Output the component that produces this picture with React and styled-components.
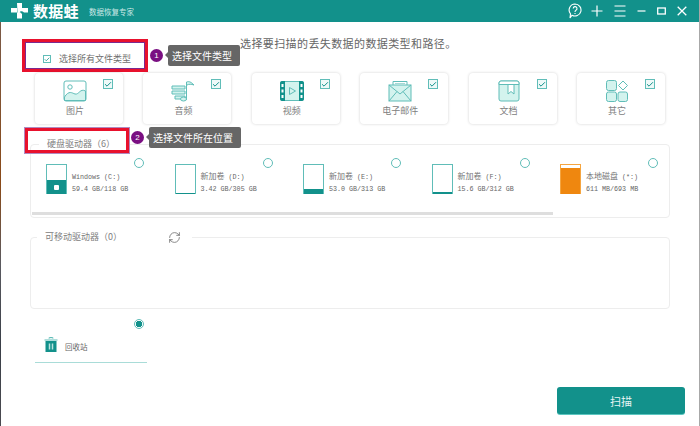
import React from 'react';
import styled, {createGlobalStyle} from 'styled-components';
import {Check, RefreshCw} from 'lucide-react';

const teal = '#12918b';
const line = '#60bdb8';
const fill = '#d3f3ee';

const Global = createGlobalStyle`
  html, body {
    margin: 0;
    padding: 0;
    background: #fff;
  }
  body {
    font-family: "Noto Sans CJK SC", "Liberation Sans", sans-serif;
    color: #777;
  }
`;

const PhotoIcon = () => (
  <svg width="24" height="22" viewBox="0 0 24 22" fill="none" stroke={line}>
    <rect x="1" y="1" width="22" height="20" rx="2" />
    <circle cx="7" cy="7" r="2.2" />
    <path d="M1.500 17 C6 10 9 13 12 14 C16 15 17 8 22.500 11 V20.500 H1.500 Z" fill={fill} />
  </svg>
);

const MusicIcon = () => (
  <svg width="24" height="22" viewBox="0 0 24 22" fill="none" stroke={line}>
    <path d="M1 6 H14 V9 H1 Z M1 11 H14 V14 H1 Z" fill={fill} />
    <path d="M4 16 H14 V19 H4 Z" fill={fill} />
    <path d="M15.500 20 V2 C18 1 20 2 23 5 C20 4 18 4 16 5" fill={fill} />
    <ellipse cx="12.500" cy="19" rx="3" ry="2" fill={fill} />
  </svg>
);

const VideoIcon = () => (
  <svg width="24" height="20" viewBox="0 0 24 20">
    <rect x="0.500" y="0.500" width="23" height="19" rx="2" fill={fill} stroke={line} />
    <path d="M0 2 a2 2 0 0 1 2-2 H5 V20 H2 a2 2 0 0 1-2-2 Z M19 0 H22 a2 2 0 0 1 2 2 V18 a2 2 0 0 1-2 2 H19 Z" fill={teal} />
    <path d="M1.500 3 H3.500 V6 H1.500 Z M1.500 8.500 H3.500 V11.500 H1.500 Z M1.500 14 H3.500 V17 H1.500 Z M20.500 3 H22.500 V6 H20.500 Z M20.500 8.500 H22.500 V11.500 H20.500 Z M20.500 14 H22.500 V17 H20.500 Z" fill="#fff" />
    <path d="M9.500 6.500 L15.500 10 L9.500 13.500 Z" fill="none" stroke={line} />
  </svg>
);

const MailIcon = () => (
  <svg width="24" height="22" viewBox="0 0 24 22" fill="none" stroke={line}>
    <path d="M5 5 V1.500 H19 V5" />
    <path d="M7 3.500 H17" stroke="#a5d9d5" />
    <rect x="1" y="5" width="22" height="16" fill={fill} />
    <path d="M1 5 L12 14 L23 5 M1 21 L9 11.500 M23 21 L15 11.500" />
  </svg>
);

const DocIcon = () => (
  <svg width="22" height="22" viewBox="0 0 22 22" fill="none" stroke={line}>
    <rect x="1" y="1" width="20" height="20" rx="2" fill={fill} />
    <path d="M1 4.500 V3 a2 2 0 0 1 2-2 H19 a2 2 0 0 1 2 2 V4.500 Z" fill="#fff" />
    <path d="M10 4.500 H16 V14 L13 11.500 L10 14 Z" fill="#fff" />
  </svg>
);

const OtherIcon = () => (
  <svg width="22" height="22" viewBox="0 0 22 22" stroke={line} fill={fill}>
    <rect x="0.500" y="0.500" width="10" height="10" rx="2" />
    <path d="M17 1 L21.500 5.500 L17 10 L12.500 5.500 Z" fill="#fff" />
    <rect x="0.500" y="12" width="10" height="9.500" rx="2" />
    <rect x="12" y="12" width="9.500" height="9.500" rx="2" />
  </svg>
);

const TrashIcon = () => (
  <svg width="14" height="15" viewBox="0 0 14 15">
    <path d="M5 1.500 a2 1 0 0 1 4 0 M0.500 3 H13.500" stroke={line} strokeWidth="1.200" fill="none" />
    <rect x="1.500" y="4" width="11" height="11" fill={teal} />
    <path d="M5.500 6.500 V12.500 M8.500 6.500 V12.500" stroke="#b9e3e0" strokeWidth="1.500" />
  </svg>
);

const Logo = () => (
  <svg width="17" height="16" viewBox="0 0 17 16" fill="#fff">
    <path d="M6 0 H11 V5 H17 V9.500 H13 C11 7.500 9 8 8 10 L6.500 10 Z M0 5 H6 V9.500 H0 Z" />
    <path d="M6 10 C7 8.500 9 8.500 10 10 L11 11 V15.500 H6 Z" />
  </svg>
);

const HeadIcons = () => (
  <Controls>
    <HelpSlot>
      <svg width="14" height="16" viewBox="0 0 14 16" fill="none" stroke="#fff" strokeWidth="1.100">
        <path d="M7 1 a6 6 0 1 1 -3 11.200 L2 15 L2.500 10.800 A6 6 0 0 1 7 1 Z" />
        <path d="M5.200 5.500 a1.900 1.900 0 1 1 2.800 1.700 c-0.700 0.400 -1 0.800 -1 1.700 M7 10 V11" />
      </svg>
    </HelpSlot>
    <svg width="12" height="12" viewBox="0 0 12 12" stroke="#fff" strokeWidth="1.200">
      <path d="M6 0.500 V11.500 M0.500 6 H11.500" />
    </svg>
    <svg width="12" height="12" viewBox="0 0 12 12" stroke="#fff" strokeWidth="1.200">
      <path d="M0.500 1 H11.500 M0.500 6 H11.500 M0.500 11 H11.500" />
    </svg>
    <svg width="9" height="12" viewBox="0 0 9 12" stroke="#fff" strokeWidth="1.200">
      <path d="M0.500 6 H8.500" />
    </svg>
    <svg width="9" height="12" viewBox="0 0 9 12" fill="none" stroke="#fff" strokeWidth="1.300">
      <rect x="0.700" y="3" width="7.600" height="6" />
    </svg>
    <svg width="10" height="12" viewBox="0 0 10 12" stroke="#fff" strokeWidth="1.300">
      <path d="M0.700 1.700 L9.300 10.300 M9.300 1.700 L0.700 10.300" />
    </svg>
  </Controls>
);

const types = [
  {name: '图片', Icon: PhotoIcon},
  {name: '音频', Icon: MusicIcon},
  {name: '视频', Icon: VideoIcon},
  {name: '电子邮件', Icon: MailIcon},
  {name: '文档', Icon: DocIcon},
  {name: '其它', Icon: OtherIcon},
];

const drives = [
  {name: '', mono: 'Windows (C:)', size: '59.4 GB/118 GB', used: 48, win: true},
  {name: '新加卷', mono: ' (D:)', size: '3.42 GB/305 GB', used: 2},
  {name: '新加卷', mono: ' (E:)', size: '53.0 GB/313 GB', used: 17},
  {name: '新加卷', mono: ' (F:)', size: '15.6 GB/312 GB', used: 6},
  {name: '本地磁盘', mono: ' (*:)', size: '611 MB/693 MB', used: 88, orange: true},
];

const App = () => {
  return (
    <>
      <Global />
      <Screen>
        <Edge />
        <Window>
          <Header>
            <Brand>
              <Logo />
              <BrandName>数据蛙</BrandName>
              <Slogan>数据恢复专家</Slogan>
            </Brand>
            <HeadIcons />
          </Header>
          <Main>
            <TopRow>
              <SelectAll>
                <SmallCheck>
                  <Check size={7} strokeWidth={3} color={teal} />
                </SmallCheck>
                选择所有文件类型
              </SelectAll>
              <Callout>
                <Badge>1</Badge>
                <Tip>选择文件类型</Tip>
              </Callout>
              <Title>选择要扫描的丢失数据的数据类型和路径。</Title>
            </TopRow>
            <Cards>
              {types.map(({name, Icon}) => (
                <Card key={name}>
                  <IconSlot>
                    <Icon />
                  </IconSlot>
                  <CardName>{name}</CardName>
                  <CardCheck>
                    <Check size={9} strokeWidth={3} color={teal} />
                  </CardCheck>
                </Card>
              ))}
            </Cards>
            <Group $height={74} $top={20}>
              <LegendBar $left={8}>
                <Legend>硬盘驱动器（6）</Legend>
              </LegendBar>
              <RedTag />
              <FloatCallout>
                <Badge>2</Badge>
                <Tip>选择文件所在位置</Tip>
              </FloatCallout>
              <Drives>
                {drives.map((d) => (
                  <Drive key={d.size}>
                    <Disk $orange={d.orange}>
                      <Used $orange={d.orange} style={{height: `${d.used}%`}}>
                        {d.win && <WinMark />}
                      </Used>
                    </Disk>
                    <DriveText>
                      <DriveName>
                        {d.name}
                        <Mono>{d.mono}</Mono>
                      </DriveName>
                      <Mono>{d.size}</Mono>
                    </DriveText>
                    <Radio $left={88} $top={-6} />
                  </Drive>
                ))}
              </Drives>
              <ScrollBar />
            </Group>
            <Group $height={72} $top={19}>
              <LegendBar $left={6}>
                <Legend>可移动驱动器（0）</Legend>
                <RefreshCw size={13} strokeWidth={1.4} color="#666" />
              </LegendBar>
            </Group>
            <Recycle>
              <TrashSlot>
                <TrashIcon />
              </TrashSlot>
              <RecycleName>回收站</RecycleName>
              <Radio $left={99} $top={0} $on />
            </Recycle>
            <Footer>
              <ScanButton>扫描</ScanButton>
            </Footer>
          </Main>
        </Window>
      </Screen>
    </>
  );
};

const Screen = styled.div`
  display: flex;
  width: 700px;
  height: 426px;
  overflow: hidden;
`;
const Edge = styled.div`
  flex: none;
  width: 1px;
  margin-top: 22px;
  background: linear-gradient(#7a5a48, #8a4a18 40%, #5a5a60 60%, #3a3f48 80%, #4a4a50);
`;
const Window = styled.div`
  flex: 1;
  display: flex;
  flex-direction: column;
  background: #fff;
  border-right: 1px solid #a8a8a8;
`;
const Header = styled.div`
  flex: none;
  height: 22px;
  margin-left: -1px;
  display: flex;
  align-items: center;
  justify-content: space-between;
  padding: 0 12px 0 11px;
  background: ${teal};
`;
const Brand = styled.div`
  display: flex;
  align-items: center;
  color: #fff;
`;
const BrandName = styled.span`
  margin-left: 5px;
  font-size: 15px;
  font-weight: 700;
  letter-spacing: 0.3px;
  line-height: 20px;
`;
const Slogan = styled.span`
  margin-left: 10px;
  font-size: 7.500px;
  color: #cfe9e7;
`;
const Controls = styled.div`
  display: flex;
  align-items: center;
  gap: 11px;
`;
const HelpSlot = styled.div`
  display: flex;
  margin-right: -2px;
`;
const Main = styled.div`
  flex: 1;
  display: flex;
  flex-direction: column;
  min-height: 0;
  padding: 17px 0 0 28px;
`;
const TopRow = styled.div`
  display: flex;
  align-items: center;
  height: 33px;
  margin-left: -7px;
`;
const SelectAll = styled.div`
  flex: none;
  box-sizing: border-box;
  width: 126px;
  height: 33px;
  display: flex;
  align-items: flex-end;
  gap: 8px;
  padding: 0 0 4px 18px;
  border: 3px solid #e8112d;
  outline: 1px solid #7a2a90;
  outline-offset: -4px;
  font-size: 9px;
  line-height: 12px;
  color: #6f6f6f;
`;
const SmallCheck = styled.span`
  box-sizing: border-box;
  width: 8px;
  height: 8px;
  margin-bottom: 2px;
  display: flex;
  align-items: center;
  justify-content: center;
  border: 1px solid ${line};
`;
const Callout = styled.div`
  flex: none;
  display: flex;
  align-items: center;
  gap: 5px;
  margin-left: 2px;
`;
const FloatCallout = styled(Callout)`
  position: absolute;
  left: 100px;
  top: -18px;
  margin: 0;
`;
const Badge = styled.span`
  flex: none;
  width: 13px;
  height: 13px;
  display: flex;
  align-items: center;
  justify-content: center;
  border-radius: 50%;
  background: #7a0f82;
  color: #fff;
  font-family: "Liberation Sans", sans-serif;
  font-size: 8px;
`;
const Tip = styled.span`
  position: relative;
  flex: none;
  height: 21px;
  padding: 0 8px 0 4px;
  display: flex;
  align-items: center;
  background: #666;
  border-radius: 2px;
  color: #fff;
  font-size: 10px;
  &::before {
    content: '';
    position: absolute;
    left: -3px;
    top: 7px;
    border-style: solid;
    border-width: 3px 3px 3px 0;
    border-color: transparent #666 transparent transparent;
  }
`;
const Title = styled.div`
  align-self: flex-start;
  margin: -2px 0 0 0;
  font-size: 11px;
  letter-spacing: 0.4px;
  line-height: 12px;
  white-space: nowrap;
  color: #666;
`;
const Cards = styled.div`
  display: grid;
  grid-template-columns: repeat(6, 88px);
  column-gap: 20.400px;
  margin: 1px 0 0 6px;
`;
const Card = styled.div`
  position: relative;
  box-sizing: border-box;
  height: 51px;
  padding: 7px 8px 0 0;
  display: flex;
  flex-direction: column;
  align-items: center;
  border-radius: 4px;
  box-shadow: 0 0 3px rgba(0, 0, 0, 0.18);
`;
const IconSlot = styled.div`
  height: 22px;
  display: flex;
  align-items: center;
`;
const CardName = styled.span`
  margin-top: 2px;
  font-size: 9px;
  line-height: 14px;
  color: #808080;
`;
const CardCheck = styled.span`
  position: absolute;
  top: 6px;
  right: 10px;
  box-sizing: border-box;
  width: 10px;
  height: 10px;
  display: flex;
  align-items: center;
  justify-content: center;
  border: 1px solid ${line};
  background: #eef9f8;
`;
const Group = styled.div`
  position: relative;
  box-sizing: border-box;
  flex: none;
  width: 640px;
  height: ${(p) => p.$height}px;
  margin: ${(p) => p.$top}px 0 0 1px;
  border: 1px solid #ededed;
  border-radius: 4px;
`;
const LegendBar = styled.div`
  position: absolute;
  top: -8px;
  left: ${(p) => p.$left}px;
  display: flex;
  align-items: center;
  gap: 46px;
  padding: 0 11px 0 8px;
  background: #fff;
`;
const Legend = styled.span`
  font-size: 9px;
  line-height: 14px;
  color: #808080;
`;
const RedTag = styled.div`
  position: absolute;
  left: -6px;
  top: -17px;
  width: 104px;
  height: 25px;
  box-sizing: border-box;
  border: 3px solid #e8112d;
  outline: 1px solid #b08ac0;
`;
const Drives = styled.div`
  display: grid;
  grid-template-columns: repeat(5, 128.500px);
  padding: 19px 0 0 15px;
`;
const Drive = styled.div`
  position: relative;
  height: 30px;
  display: flex;
  gap: 5px;
`;
const Disk = styled.div`
  flex: none;
  box-sizing: border-box;
  width: 21px;
  height: 30px;
  display: flex;
  align-items: flex-end;
  border: 1px solid ${(p) => (p.$orange ? '#f5a540' : line)};
  border-bottom: 0;
`;
const Used = styled.div`
  flex: 1;
  display: flex;
  align-items: center;
  justify-content: center;
  background: ${(p) => (p.$orange ? '#ef870f' : teal)};
`;
const WinMark = styled.span`
  width: 5px;
  height: 5px;
  border-radius: 1px;
  background: #fff;
`;
const DriveText = styled.div`
  display: flex;
  flex-direction: column;
  justify-content: flex-end;
  gap: 3px;
  padding: 8px 0 0 0;
  font-size: 8px;
  line-height: 9px;
  color: #777;
`;
const DriveName = styled.span`
  white-space: pre;
`;
const Mono = styled.span`
  font-family: "Liberation Mono", monospace;
  font-size: 6.700px;
  white-space: pre;
  color: #666;
`;
const Radio = styled.span`
  position: absolute;
  left: ${(p) => p.$left}px;
  top: ${(p) => p.$top}px;
  box-sizing: border-box;
  width: 10px;
  height: 10px;
  border-radius: 50%;
  border: 1px solid ${line};
  background: ${(p) => (p.$on ? `radial-gradient(circle, ${teal} 3px, #fff 3.500px)` : '#fff')};
`;
const ScrollBar = styled.div`
  position: absolute;
  left: 1px;
  bottom: 2px;
  width: 521px;
  height: 3px;
  background: #dedede;
`;
const Recycle = styled.div`
  position: relative;
  flex: none;
  box-sizing: border-box;
  width: 112px;
  height: 44px;
  margin: 10px 0 0 6px;
  padding: 14px 0 0 9px;
  display: flex;
  align-items: flex-start;
  border-bottom: 1px solid #a9dcd8;
`;
const TrashSlot = styled.div`
  height: 15px;
`;
const RecycleName = styled.span`
  margin: 7px 0 0 7px;
  font-size: 7.500px;
  line-height: 14px;
  color: #666;
`;
const Footer = styled.div`
  display: flex;
  justify-content: flex-end;
  padding: 24px 14px 0 0;
`;
const ScanButton = styled.button`
  width: 128px;
  height: 27px;
  padding: 0;
  border: 0;
  border-radius: 3px;
  background: ${teal};
  box-shadow: 0 1px 0 #5cc6c0;
  color: #e8f5f4;
  font-family: inherit;
  font-size: 11px;
`;

export default App;
